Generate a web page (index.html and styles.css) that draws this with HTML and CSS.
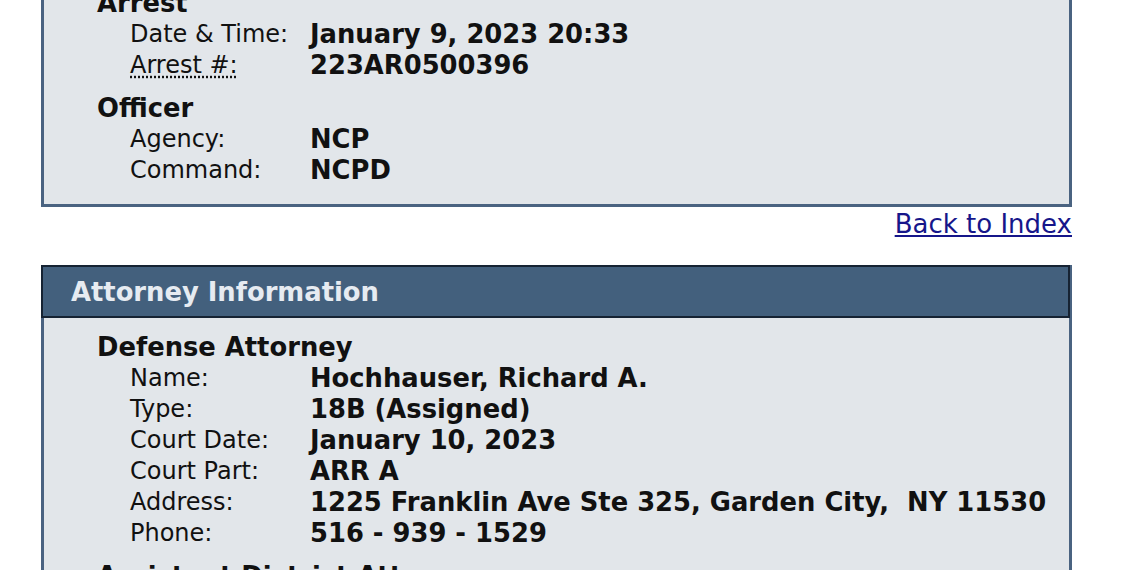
FILE: index.html
```html
<!DOCTYPE html>
<html lang="en">

<head>
    <meta charset="UTF-8" />
    <title>Case Details</title>
    <link rel="stylesheet" href="styles.css">
</head>

<body>
    <div class="page">
        <div class="panel panel-top">
            <div class="section">
                <h3>Arrest</h3>
                <dl class="rows">
                    <dt>Date &amp; Time:</dt>
                    <dd>January 9, 2023 20:33</dd>
                    <dt><abbr title="Arrest Number">Arrest #:</abbr></dt>
                    <dd>223AR0500396</dd>
                </dl>
            </div>
            <div class="section">
                <h3>Officer</h3>
                <dl class="rows">
                    <dt>Agency:</dt>
                    <dd>NCP</dd>
                    <dt>Command:</dt>
                    <dd>NCPD</dd>
                </dl>
            </div>
        </div>
        <div class="back">
            <a href="#index">Back to Index</a>
        </div>

        <div class="panel">
            <h2 class="panel-title">Attorney Information</h2>
            <div class="panel-body">
                <div class="section">
                    <h3>Defense Attorney</h3>
                    <dl class="rows">
                        <dt>Name:</dt>
                        <dd>Hochhauser, Richard A.</dd>
                        <dt>Type:</dt>
                        <dd>18B (Assigned)</dd>
                        <dt>Court Date:</dt>
                        <dd>January 10, 2023</dd>
                        <dt>Court Part:</dt>
                        <dd>ARR A</dd>
                        <dt>Address:</dt>
                        <dd>1225 Franklin Ave Ste 325, Garden City,&nbsp; NY 11530</dd>
                        <dt>Phone:</dt>
                        <dd>516 - 939 - 1529</dd>
                    </dl>
                </div>
                <div class="section">
                    <h3>Assistant District Attorney</h3>
                </div>
            </div>
        </div>
    </div>
</body>

</html>
```

FILE: styles.css
```css
:root {
    --panel-bg: #e2e6ea;
    --panel-border: #4a6381;
    --title-bg: #43607d;
    --title-border: #162333;
    --title-text: #e6ebf1;
    --text: #111111;
    --link: #16168a;
}

* {
    margin: 0;
    padding: 0;
    box-sizing: border-box;
}

body {
    font-family: "DejaVu Sans", Verdana, sans-serif;
    background-color: #ffffff;
    color: var(--text);
    overflow: hidden;
}

.page {
    width: 1031px;
    margin: -27px 0 0 41px;
}

.panel {
    background-color: var(--panel-bg);
    border: 3px solid var(--panel-border);
}

.panel-top {
    padding: 12px 0 18px 53px;
}

.panel-title {
    margin: -3px -1px 0 -3px;
    padding: 0 0 0 28px;
    height: 53px;
    line-height: 51px;
    background-color: var(--title-bg);
    border: 2px solid var(--title-border);
    color: var(--title-text);
    font-size: 25.8px;
    font-weight: bold;
}

.panel-body {
    padding: 14px 0 20px 53px;
}

.section + .section {
    margin-top: 12px;
}

h3 {
    font-size: 25.8px;
    font-weight: bold;
    line-height: 31px;
}

.rows {
    display: grid;
    grid-template-columns: 180px auto;
    padding-left: 33px;
    line-height: 31px;
}

.rows dt {
    font-size: 24px;
}

.rows dd {
    font-size: 25.8px;
    font-weight: bold;
}

abbr {
    text-decoration: underline dotted;
    text-underline-offset: 3px;
}

.back {
    text-align: right;
    margin-top: 2px;
    height: 56px;
    line-height: 31px;
    font-size: 26px;
}

.back a {
    color: var(--link);
}
```
